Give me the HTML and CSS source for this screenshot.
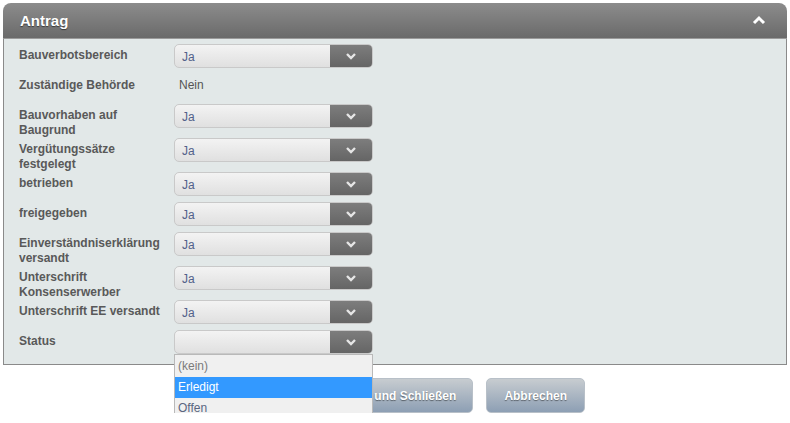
FILE: index.html
```html
<!DOCTYPE html>
<html lang="de">
<head>
<meta charset="utf-8">
<title>Antrag</title>
<link rel="stylesheet" href="styles.css">
</head>
<body>
<div class="panel">
  <div class="panel-head">
    <span class="panel-title">Antrag</span>
    <svg class="collapse" width="14" height="10" viewBox="0 0 14 10"><path d="M2 8 L7 3 L12 8" fill="none" stroke="#fff" stroke-width="3"/></svg>
  </div>
  <div class="panel-body">
    <div class="row"><div class="label">Bauverbotsbereich</div><div class="select"><span class="val">Ja</span><span class="btn"><svg width="12" height="8" viewBox="0 0 12 8"><path d="M2 2 L6 6 L10 2" fill="none" stroke="#e6e6e6" stroke-width="2.4"/></svg></span></div></div>
    <div class="row"><div class="label">Zuständige Behörde</div><div class="plain">Nein</div></div>
    <div class="row"><div class="label">Bauvorhaben auf Baugrund</div><div class="select"><span class="val">Ja</span><span class="btn"><svg width="12" height="8" viewBox="0 0 12 8"><path d="M2 2 L6 6 L10 2" fill="none" stroke="#e6e6e6" stroke-width="2.4"/></svg></span></div></div>
    <div class="row"><div class="label">Vergütungssätze festgelegt</div><div class="select"><span class="val">Ja</span><span class="btn"><svg width="12" height="8" viewBox="0 0 12 8"><path d="M2 2 L6 6 L10 2" fill="none" stroke="#e6e6e6" stroke-width="2.4"/></svg></span></div></div>
    <div class="row"><div class="label">betrieben</div><div class="select"><span class="val">Ja</span><span class="btn"><svg width="12" height="8" viewBox="0 0 12 8"><path d="M2 2 L6 6 L10 2" fill="none" stroke="#e6e6e6" stroke-width="2.4"/></svg></span></div></div>
    <div class="row"><div class="label">freigegeben</div><div class="select"><span class="val">Ja</span><span class="btn"><svg width="12" height="8" viewBox="0 0 12 8"><path d="M2 2 L6 6 L10 2" fill="none" stroke="#e6e6e6" stroke-width="2.4"/></svg></span></div></div>
    <div class="row"><div class="label">Einverständniserklärung versandt</div><div class="select"><span class="val">Ja</span><span class="btn"><svg width="12" height="8" viewBox="0 0 12 8"><path d="M2 2 L6 6 L10 2" fill="none" stroke="#e6e6e6" stroke-width="2.4"/></svg></span></div></div>
    <div class="row"><div class="label">Unterschrift Konsenserwerber</div><div class="select"><span class="val">Ja</span><span class="btn"><svg width="12" height="8" viewBox="0 0 12 8"><path d="M2 2 L6 6 L10 2" fill="none" stroke="#e6e6e6" stroke-width="2.4"/></svg></span></div></div>
    <div class="row"><div class="label">Unterschrift EE versandt</div><div class="select"><span class="val">Ja</span><span class="btn"><svg width="12" height="8" viewBox="0 0 12 8"><path d="M2 2 L6 6 L10 2" fill="none" stroke="#e6e6e6" stroke-width="2.4"/></svg></span></div></div>
    <div class="row"><div class="label">Status</div>
      <div class="select-wrap">
        <div class="select"><span class="val"></span><span class="btn"><svg width="12" height="8" viewBox="0 0 12 8"><path d="M2 2 L6 6 L10 2" fill="none" stroke="#e6e6e6" stroke-width="2.4"/></svg></span></div>
        <ul class="dropdown">
          <li class="opt muted">(kein)</li>
          <li class="opt active">Erledigt</li>
          <li class="opt">Offen</li>
        </ul>
      </div>
    </div>
  </div>
</div>
<div class="actions">
  <button class="action">Speichern und Schließen</button>
  <button class="action">Abbrechen</button>
</div>
</body>
</html>
```

FILE: styles.css
```css
html, body {
  margin: 0;
  padding: 0;
  background: #ffffff;
}
body {
  padding: 3px 3px 0 3px;
  font-family: "Liberation Sans", Arial, sans-serif;
  font-size: 12px;
}
.panel {
  width: 784px;
  box-sizing: border-box;
}
.panel-head {
  height: 36px;
  box-sizing: border-box;
  border-radius: 8px 8px 0 0;
  background: linear-gradient(#8c8c8c, #6a6a6a);
  border-bottom: 1px solid #9a9a9a;
  display: flex;
  align-items: center;
  justify-content: space-between;
  padding: 0 21px 0 17px;
}
.panel-title {
  color: #ffffff;
  font-weight: bold;
  font-size: 15px;
  text-shadow: 0 1px 1px rgba(0,0,0,0.5);
}
.collapse {
  display: block;
  margin-top: -1px;
}
.panel-body {
  background: #e2e8e8;
  border: 1px solid #8a8a8a;
  border-top: none;
  padding: 5px 0 4px 15px;
}
.row {
  display: flex;
  align-items: flex-start;
}
.label {
  width: 150px;
  padding-right: 5px;
  padding-top: 4px;
  line-height: 15px;
  font-weight: bold;
  color: #595959;
}
.plain {
  padding: 4px 0 0 5px;
  line-height: 15px;
  color: #555;
  height: 26px;
}
.select-wrap {
  position: relative;
}
.select {
  width: 199px;
  height: 24px;
  box-sizing: border-box;
  border: 1px solid #c9c9c9;
  border-radius: 5px;
  background: linear-gradient(#f3f3f3, #e0e0e0);
  display: flex;
  margin-bottom: 6px;
  overflow: hidden;
}
.val {
  flex: 1;
  padding: 5px 0 0 7px;
  line-height: 15px;
  color: #52618a;
}
.btn {
  width: 42px;
  background: linear-gradient(#7d7d7d, #656565);
  display: flex;
  align-items: center;
  justify-content: center;
}
.btn svg {
  display: block;
}
.dropdown {
  position: absolute;
  left: 0;
  top: 24px;
  width: 199px;
  box-sizing: border-box;
  margin: 0;
  padding: 1px 0 0 0;
  list-style: none;
  background: #f0f0f0;
  border: 1px solid #b9b9b9;
  z-index: 5;
}
.opt {
  height: 21px;
  line-height: 21px;
  padding-left: 3px;
  color: #5a6680;
}
.opt.muted {
  color: #7b7b7b;
}
.opt.active {
  background: #3399ff;
  color: #ffffff;
}
.actions {
  display: flex;
  gap: 13px;
  padding: 13px 0 0 293px;
}
.action {
  height: 35px;
  padding: 0 16px;
  border: 1px solid #b8c0c8;
  border-radius: 5px;
  background: linear-gradient(#c7ccd0, #8d9fb4);
  color: #ffffff;
  font-family: "Liberation Sans", Arial, sans-serif;
  font-size: 12px;
  font-weight: bold;
  text-shadow: 0 1px 1px rgba(0,0,0,0.45);
}
.action + .action {
  padding: 0 17px;
}
```
